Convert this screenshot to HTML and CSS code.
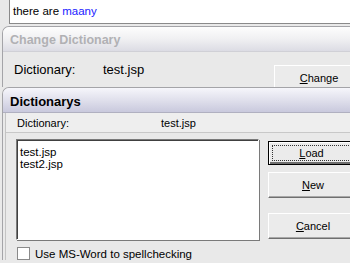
FILE: index.html
```html
<!DOCTYPE html>
<html>
<head>
<meta charset="utf-8">
<link rel="stylesheet" href="styles.css">
</head>
<body>
<div class="page">
  <div class="editor"><span>there are </span><span class="miss">maany</span></div>
  <div class="panel panel-change">
    <div class="title title-faded">Change Dictionary</div>
    <div class="change-row">
      <span class="lbl">Dictionary:</span>
      <span class="val">test.jsp</span>
      <button class="btn btn-change"><u>C</u>hange</button>
    </div>
  </div>
  <div class="panel panel-dicts">
    <div class="title title-active">Dictionarys</div>
    <div class="inner">
      <div class="info-row">
        <span class="ilbl">Dictionary:</span>
        <span class="ival">test.jsp</span>
      </div>
      <div class="main">
        <div class="list">
          <div class="item">test.jsp</div>
          <div class="item">test2.jsp</div>
        </div>
        <div class="buttons">
          <button class="btn btn-default"><span class="focus"><u>L</u>oad</span></button>
          <button class="btn btn-new"><u>N</u>ew</button>
          <button class="btn btn-cancel"><u>C</u>ancel</button>
        </div>
      </div>
      <label class="check"><span class="box"></span><span>Use MS-Word to spellchecking</span></label>
    </div>
  </div>
</div>
</body>
</html>
```
FILE: styles.css
```css
html, body {
  margin: 0;
  padding: 0;
  width: 350px;
  height: 263px;
  overflow: hidden;
  background: #e9e9e9;
  font-family: "Liberation Sans", Arial, sans-serif;
}
.page {
  width: 350px;
  height: 263px;
  overflow: hidden;
}
.editor {
  margin-left: 9px;
  height: 23px;
  background: #fff;
  border: 1px solid #8a8a8a;
  border-top: none;
  border-right: none;
  font-size: 11.5px;
  line-height: 23px;
  padding-left: 3px;
  color: #000;
}
.miss {
  color: #1a1aff;
}
.panel {
  margin-left: 2px;
  border: 1px solid #a4a4a8;
  border-right: none;
  border-bottom: none;
  border-top-left-radius: 7px;
  overflow: hidden;
}
.panel-change {
  margin-top: 2px;
  background: #e9e9e9;
}
.title {
  height: 24px;
  line-height: 27px;
  padding-left: 7px;
  font-weight: bold;
  font-size: 13px;
  font-family: "Liberation Sans", Arial, sans-serif;
  border-bottom: 1px solid #d0d0d6;
}
.title-faded {
  color: #b1b1b4;
  font-size: 12.5px;
  background: linear-gradient(#fdfdfd, #f0f0f2 50%, #dcdce4);
}
.title-active {
  color: #000;
  background: linear-gradient(#f6f6fb, #e0e0ec 50%, #c9c9dd);
  border-bottom: 1px solid #b0b0c0;
}
.change-row {
  height: 35px;
  display: flex;
  align-items: center;
  font-size: 13px;
  padding-left: 11px;
}
.lbl { width: 89px; flex: none; }
.val { width: 171px; flex: none; }
.btn {
  font-family: "Liberation Sans", Arial, sans-serif;
  font-size: 11px;
  color: #000;
  background: #ebebeb;
  border: 1px solid;
  border-color: #fff #6f6f6f #6f6f6f #fff;
  box-shadow: inset -1px -1px 0 #a8a8a8;
  padding: 0;
  text-align: center;
  flex: none;
}
.btn u { text-decoration: underline; }
.btn-change {
  width: 90px;
  height: 26px;
  margin-top: 16px;
  border-color: #fff #404040 #404040 #fff;
}
.panel-dicts {
  background: #e9e9e9;
}
.inner {
  margin-left: 2px;
  border-left: 1px solid #c4c4c4;
}
.info-row {
  height: 19px;
  display: flex;
  align-items: center;
  font-size: 11px;
  padding-left: 11px;
  border-bottom: 1px solid #c8c8c8;
  background: #eeeeee;
}
.ilbl { width: 144px; }
.main {
  display: flex;
  margin-top: 6px;
  padding-left: 10px;
}
.list {
  width: 243px;
  height: 101px;
  flex: none;
  background: #fff;
  border: 1px solid;
  border-color: #7a7a7a #fff #fff #7a7a7a;
  box-shadow: inset 1px 1px 0 #404040, 1px 1px 0 #7a7a7a;
  padding: 6px 3px 0;
  box-sizing: border-box;
  font-size: 11.5px;
  line-height: 12px;
}
.buttons {
  display: flex;
  flex-direction: column;
  margin-left: 9px;
  padding-top: 2px;
}
.btn-default {
  width: 90px;
  height: 24px;
  border: 1px solid #000;
  box-shadow: inset 1px 1px 0 #fff, inset -2px -2px 0 #6f6f6f;
  padding: 3px;
}
.focus {
  display: flex;
  align-items: center;
  justify-content: center;
  height: 100%;
  width: 79px;
  border: 1px dotted #333;
  box-sizing: border-box;
}
.btn-new {
  width: 90px;
  height: 26px;
  margin-top: 7px;
}
.btn-cancel {
  width: 90px;
  height: 26px;
  margin-top: 15px;
}
.check {
  display: flex;
  align-items: center;
  margin-top: 7px;
  padding-left: 11px;
  font-size: 11.5px;
}
.box {
  width: 11px;
  height: 11px;
  background: #fff;
  border: 1px solid #8a8a8a;
  margin-right: 5px;
}
```
